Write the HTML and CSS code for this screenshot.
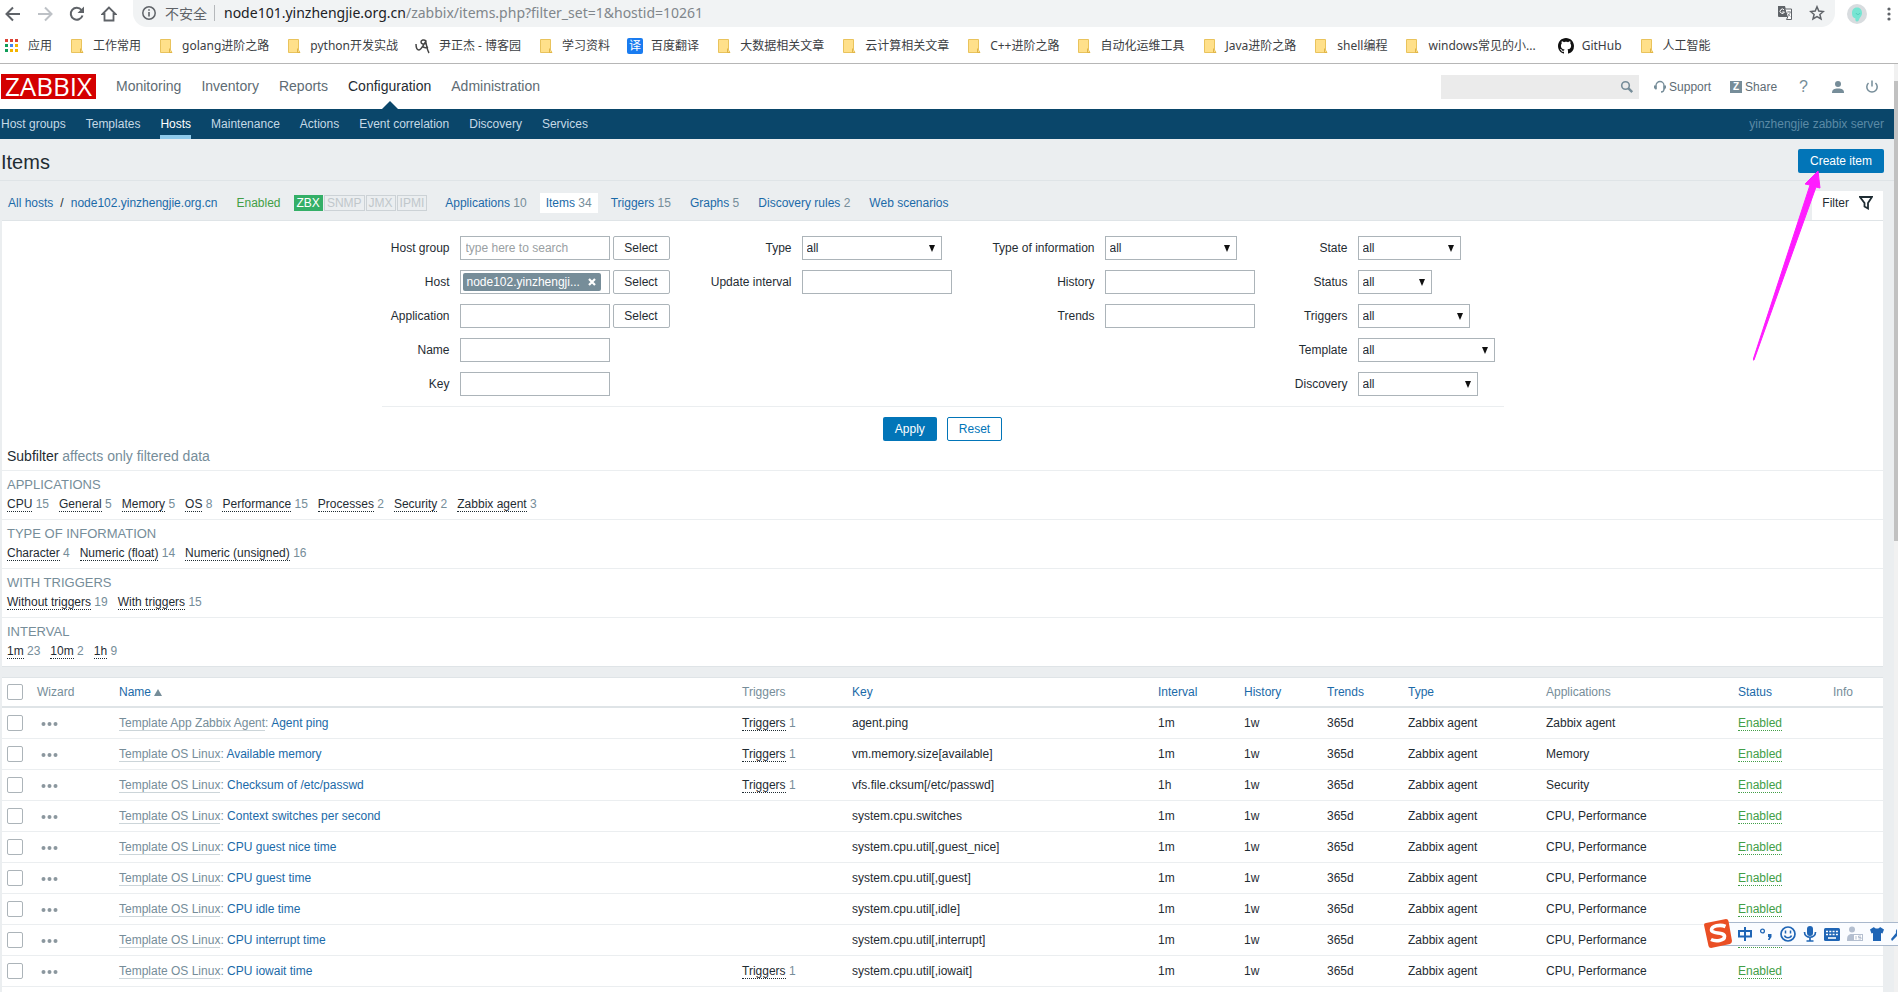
FILE: index.html
```html
<!DOCTYPE html>
<html lang="en">
<head>
<meta charset="utf-8">
<title>Configuration of items</title>
<link rel="stylesheet" href="styles.css">
</head>
<body>
<svg class="defs" aria-hidden="true">
  <symbol id="folder" viewBox="0 0 16 16"><path d="M2.500 1.500h10v10.500l1.500 2.500h-11.500z" fill="#ffe08a" stroke="#e9c35c"/><path d="M11.500 10.500v4h2.500" fill="none" stroke="#e0b548"/></symbol>
  <symbol id="more" viewBox="0 0 18 6"><g fill="#8b979e"><circle cx="2.500" cy="3" r="2"/><circle cx="8.500" cy="3" r="2"/><circle cx="14.500" cy="3" r="2"/></g></symbol>
</svg>

<div class="browser">
  <div class="toolbar">
    <button class="tool" aria-label="Back"><svg width="16" height="16" viewBox="0 0 16 16"><path d="M15 8H2M8 1.500L1.500 8L8 14.500" fill="none" stroke="#5f6368" stroke-width="2"/></svg></button>
    <button class="tool" aria-label="Forward"><svg width="16" height="16" viewBox="0 0 16 16"><path d="M1 8h13M8 1.500L14.500 8L8 14.500" fill="none" stroke="#bdc1c6" stroke-width="2"/></svg></button>
    <button class="tool" aria-label="Reload"><svg width="16" height="16" viewBox="0 0 16 16"><path d="M13.500 9.500A6 6 0 1 1 12.500 4" fill="none" stroke="#5f6368" stroke-width="2"/><path d="M15 .5v6.500H8.500z" fill="#5f6368"/></svg></button>
    <button class="tool" aria-label="Home"><svg width="16" height="16" viewBox="0 0 16 16"><path d="M8 1.500L1.500 8H3.500v6.500h9V8h2z" fill="none" stroke="#5f6368" stroke-width="1.800"/></svg></button>
    <div class="omnibox">
      <svg width="14" height="14" viewBox="0 0 14 14"><circle cx="7" cy="7" r="6.200" fill="none" stroke="#5f6368" stroke-width="1.500"/><path d="M7 6v4.500M7 3.200v1.600" stroke="#5f6368" stroke-width="1.600"/></svg>
      <span class="insecure">不安全</span>
      <span class="url"><b>node101.yinzhengjie.org.cn</b>/zabbix/items.php?filter_set=1&amp;hostid=10261</span>
      <svg width="14" height="14" viewBox="0 0 14 14"><path d="M0 0h7l3 11H1a1 1 0 0 1-1-1z" fill="#5f6368"/><path d="M7.500 3h6v10.500H8.500l1.500-3" fill="#fff" stroke="#5f6368"/><path d="M9 6h4M11 5v1M12.300 6c-.4 2-1.500 3-2.500 4M9.600 7.500l2.700 3" fill="none" stroke="#8b8f94"/><path d="M6 3.800A2.200 2.200 0 1 0 6.400 6H4.300" fill="none" stroke="#fff"/></svg>
      <svg width="16" height="16" viewBox="0 0 16 16"><path d="M8 1.800l1.800 4.300 4.600.4-3.500 3 1.100 4.500L8 11.600 4 14l1.100-4.500-3.500-3 4.600-.4z" fill="none" stroke="#5f6368" stroke-width="1.500"/></svg>
    </div>
    <svg class="avatar" width="20" height="20" viewBox="0 0 20 20"><circle cx="10" cy="10" r="10" fill="#d8dcdf"/><path d="M10 3.500c3.500 0 5 2.500 5 5.500 0 2.500-1.500 3.500-2.500 5.500-.5 1.500-1 3-2.500 3s-2-1.500-1.500-3C6 14 5 12 5 9c0-3 1.500-5.500 5-5.500z" fill="#76e5d2"/><path d="M9 9c1 2 3 2 4 0" fill="none" stroke="#4fc9b8"/></svg>
    <button class="kebab" aria-label="Menu"><svg width="4" height="14" viewBox="0 0 4 14"><g fill="#5f6368"><circle cx="2" cy="2" r="1.600"/><circle cx="2" cy="7" r="1.600"/><circle cx="2" cy="12" r="1.600"/></g></svg></button>
  </div>
  <nav class="bookmarks">
    <a href="#"><svg width="16" height="16" viewBox="0 0 16 16"><g fill="#db4437"><path d="M1 1h3v3H1zM6 1h3v3H6zM11 1h3v3h-3z"/></g><path d="M1 6h3v3H1z" fill="#0f9d58"/><path d="M6 6h3v3H6z" fill="#4285f4"/><path d="M11 6h3v3h-3z" fill="#f4b400"/><path d="M1 11h3v3H1z" fill="#0f9d58"/><path d="M6 11h3v3H6zM11 11h3v3h-3z" fill="#f4b400"/></svg>应用</a>
    <a href="#"><svg width="16" height="16"><use href="#folder"/></svg>工作常用</a>
    <a href="#"><svg width="16" height="16"><use href="#folder"/></svg>golang进阶之路</a>
    <a href="#"><svg width="16" height="16"><use href="#folder"/></svg>python开发实战</a>
    <a href="#"><svg width="16" height="16" viewBox="0 0 16 16"><path d="M1 6c0 4 1 6 3 6s4-4 7-9c-2-2-5-1-5 1s3 3 5 1c1 4 1 7 3 10M7 8c2 2 4 2 6 1" fill="none" stroke="#444" stroke-width="1.500"/></svg>尹正杰 - 博客园</a>
    <a href="#"><svg width="16" height="16"><use href="#folder"/></svg>学习资料</a>
    <a href="#"><span class="fanyi">译</span>百度翻译</a>
    <a href="#"><svg width="16" height="16"><use href="#folder"/></svg>大数据相关文章</a>
    <a href="#"><svg width="16" height="16"><use href="#folder"/></svg>云计算相关文章</a>
    <a href="#"><svg width="16" height="16"><use href="#folder"/></svg>C++进阶之路</a>
    <a href="#"><svg width="16" height="16"><use href="#folder"/></svg>自动化运维工具</a>
    <a href="#"><svg width="16" height="16"><use href="#folder"/></svg>Java进阶之路</a>
    <a href="#"><svg width="16" height="16"><use href="#folder"/></svg>shell编程</a>
    <a href="#"><svg width="16" height="16"><use href="#folder"/></svg>windows常见的小...</a>
    <a href="#" class="github"><svg width="16" height="16" viewBox="0 0 16 16"><path fill="#111" d="M8 0C3.580 0 0 3.580 0 8c0 3.540 2.290 6.530 5.470 7.590.4.070.55-.17.55-.38 0-.19-.01-.82-.01-1.490-2.010.37-2.530-.49-2.690-.94-.09-.23-.48-.94-.82-1.130-.28-.15-.68-.52-.01-.53.63-.01 1.080.58 1.230.82.72 1.210 1.870.87 2.330.66.07-.52.28-.87.51-1.070-1.780-.2-3.640-.89-3.640-3.950 0-.87.31-1.590.82-2.150-.08-.2-.36-1.020.08-2.120 0 0 .67-.21 2.200.82.64-.18 1.320-.27 2-.27s1.360.09 2 .27c1.530-1.040 2.200-.82 2.200-.82.44 1.100.16 1.920.08 2.120.51.56.82 1.270.82 2.150 0 3.070-1.870 3.750-3.650 3.950.29.25.54.73.54 1.480 0 1.070-.01 1.930-.01 2.200 0 .21.15.46.55.38A8.010 8.010 0 0 0 16 8c0-4.420-3.580-8-8-8z"/></svg>GitHub</a>
    <a href="#"><svg width="16" height="16"><use href="#folder"/></svg>人工智能</a>
  </nav>
</div>

<div class="viewport">
<div class="page">
  <header class="header">
    <a href="#" class="logo">ZABBIX</a>
    <nav class="mainnav">
      <a href="#">Monitoring</a><a href="#">Inventory</a><a href="#">Reports</a><a href="#" class="current">Configuration</a><a href="#">Administration</a>
    </nav>
    <form class="search">
      <input type="text" aria-label="Search">
      <button type="button" aria-label="Search"><svg width="14" height="14" viewBox="0 0 14 14"><circle cx="5.500" cy="5.500" r="3.800" fill="none" stroke="#768d99" stroke-width="1.600"/><path d="M8.200 8.200l4 4" stroke="#768d99" stroke-width="2.400"/></svg></button>
    </form>
    <a href="#" class="support"><svg width="12" height="13" viewBox="0 0 12 13"><path d="M2 9V5.500a4 4 0 0 1 8 0V9c0 2-1 3-3 3" fill="none" stroke="#768d99" stroke-width="1.300"/><path d="M0 5.500h2.500v4H1.500L0 8zM12 5.500H9.500v4h1L12 8z" fill="#768d99"/></svg>Support</a>
    <a href="#" class="share"><span class="zbadge">Z</span>Share</a>
    <a href="#" class="help">?</a>
    <a href="#" class="user" aria-label="Profile"><svg width="12" height="12" viewBox="0 0 12 12"><circle cx="6" cy="3" r="3" fill="#768d99"/><path d="M0 12c0-3.500 2-4.500 6-4.500s6 1 6 4.500z" fill="#768d99"/></svg></a>
    <a href="#" class="power" aria-label="Sign out"><svg width="14" height="14" viewBox="0 0 14 14"><path d="M3.500 3a5.200 5.200 0 1 0 7 0M7 .5v6" fill="none" stroke="#768d99" stroke-width="1.500"/></svg></a>
  </header>
  <nav class="subnav">
    <a href="#">Host groups</a><a href="#">Templates</a><a href="#" class="selected">Hosts</a><a href="#">Maintenance</a><a href="#">Actions</a><a href="#">Event correlation</a><a href="#">Discovery</a><a href="#">Services</a>
    <span class="server">yinzhengjie zabbix server</span>
  </nav>

  <div class="title">
    <h1>Items</h1>
    <button class="primary">Create item</button>
  </div>

  <div class="tabs">
    <a href="#">All hosts</a><span class="slash">/</span><a href="#">node102.yinzhengjie.org.cn</a>
    <span class="enabled">Enabled</span>
    <span class="ifaces"><span class="on">ZBX</span><span>SNMP</span><span>JMX</span><span>IPMI</span></span>
    <span class="objects"><span><a href="#">Applications</a> 10</span><span class="active"><a href="#">Items</a> 34</span><span><a href="#">Triggers</a> 15</span><span><a href="#">Graphs</a> 5</span><span><a href="#">Discovery rules</a> 2</span><span><a href="#">Web scenarios</a></span></span>
    <a href="#" class="filtertab">Filter<svg width="14" height="14" viewBox="0 0 14 14"><path d="M1 1h12L9 7v5.500L5.500 10.500V7z" fill="none" stroke="#1f2c33" stroke-width="1.800"/></svg></a>
  </div>

  <section class="filter">
    <form class="form">
      <div class="groups">
        <div class="group g1">
          <label for="hg">Host group</label><div class="field"><input id="hg" class="text" type="text" placeholder="type here to search"><button type="button">Select</button></div>
          <label for="ho">Host</label><div class="field"><div class="multi text"><span class="chip">node102.yinzhengji...<button type="button" aria-label="Remove"><svg width="8" height="8" viewBox="0 0 8 8"><path d="M1 1l6 6M7 1L1 7" stroke="#fff" stroke-width="2.200"/></svg></button></span><input id="ho" type="text"></div><button type="button">Select</button></div>
          <label for="ap">Application</label><div class="field"><input id="ap" class="text" type="text"><button type="button">Select</button></div>
          <label for="na">Name</label><div class="field"><input id="na" class="text" type="text"></div>
          <label for="ke">Key</label><div class="field"><input id="ke" class="text" type="text"></div>
        </div>
        <div class="group g2">
          <label for="ty">Type</label><div class="field"><select id="ty" class="w140"><option>all</option></select></div>
          <label for="ui">Update interval</label><div class="field"><input id="ui" class="text" type="text"></div>
        </div>
        <div class="group g3">
          <label for="ti">Type of information</label><div class="field"><select id="ti" class="w132"><option>all</option></select></div>
          <label for="hi">History</label><div class="field"><input id="hi" class="text" type="text"></div>
          <label for="tr">Trends</label><div class="field"><input id="tr" class="text" type="text"></div>
        </div>
        <div class="group g4">
          <label for="st">State</label><div class="field"><select id="st" class="w103"><option>all</option></select></div>
          <label for="ss">Status</label><div class="field"><select id="ss" class="w74"><option>all</option></select></div>
          <label for="tg">Triggers</label><div class="field"><select id="tg" class="w112"><option>all</option></select></div>
          <label for="te">Template</label><div class="field"><select id="te" class="w137"><option>all</option></select></div>
          <label for="di">Discovery</label><div class="field"><select id="di" class="w120"><option>all</option></select></div>
        </div>
      </div>
      <div class="actions"><button type="button" class="primary">Apply</button><button type="button" class="outline">Reset</button></div>
    </form>
    <p class="subtitle">Subfilter <span>affects only filtered data</span></p>
    <div class="sub"><h3>APPLICATIONS</h3><p><span><a href="#">CPU</a> 15</span><span><a href="#">General</a> 5</span><span><a href="#">Memory</a> 5</span><span><a href="#">OS</a> 8</span><span><a href="#">Performance</a> 15</span><span><a href="#">Processes</a> 2</span><span><a href="#">Security</a> 2</span><span><a href="#">Zabbix agent</a> 3</span></p></div>
    <div class="sub"><h3>TYPE OF INFORMATION</h3><p><span><a href="#">Character</a> 4</span><span><a href="#">Numeric (float)</a> 14</span><span><a href="#">Numeric (unsigned)</a> 16</span></p></div>
    <div class="sub"><h3>WITH TRIGGERS</h3><p><span><a href="#">Without triggers</a> 19</span><span><a href="#">With triggers</a> 15</span></p></div>
    <div class="sub"><h3>INTERVAL</h3><p><span><a href="#">1m</a> 23</span><span><a href="#">10m</a> 2</span><span><a href="#">1h</a> 9</span></p></div>
  </section>

  <div class="list">
  <table>
    <colgroup><col class="c-check"><col class="c-wizard"><col><col class="c-trig"><col class="c-key"><col class="c-int"><col class="c-hist"><col class="c-trend"><col class="c-type"><col class="c-apps"><col class="c-status"><col class="c-info"></colgroup>
    <thead><tr><th><input type="checkbox" aria-label="Select all"></th><th>Wizard</th><th><a href="#">Name<i class="asc"></i></a></th><th>Triggers</th><th><a href="#">Key</a></th><th><a href="#">Interval</a></th><th><a href="#">History</a></th><th><a href="#">Trends</a></th><th><a href="#">Type</a></th><th>Applications</th><th><a href="#">Status</a></th><th>Info</th></tr></thead>
    <tbody>
      <tr><td><input type="checkbox" aria-label="Agent ping"></td><td><button class="wiz" aria-label="Wizard"><svg width="18" height="6"><use href="#more"/></svg></button></td><td class="name"><a href="#" class="tpl">Template App Zabbix Agent</a>: <a href="#">Agent ping</a></td><td class="trig"><a href="#">Triggers</a> 1</td><td>agent.ping</td><td>1m</td><td>1w</td><td>365d</td><td>Zabbix agent</td><td>Zabbix agent</td><td><a href="#" class="ok">Enabled</a></td><td></td></tr>
      <tr><td><input type="checkbox" aria-label="Available memory"></td><td><button class="wiz" aria-label="Wizard"><svg width="18" height="6"><use href="#more"/></svg></button></td><td class="name"><a href="#" class="tpl">Template OS Linux</a>: <a href="#">Available memory</a></td><td class="trig"><a href="#">Triggers</a> 1</td><td>vm.memory.size[available]</td><td>1m</td><td>1w</td><td>365d</td><td>Zabbix agent</td><td>Memory</td><td><a href="#" class="ok">Enabled</a></td><td></td></tr>
      <tr><td><input type="checkbox" aria-label="Checksum"></td><td><button class="wiz" aria-label="Wizard"><svg width="18" height="6"><use href="#more"/></svg></button></td><td class="name"><a href="#" class="tpl">Template OS Linux</a>: <a href="#">Checksum of /etc/passwd</a></td><td class="trig"><a href="#">Triggers</a> 1</td><td>vfs.file.cksum[/etc/passwd]</td><td>1h</td><td>1w</td><td>365d</td><td>Zabbix agent</td><td>Security</td><td><a href="#" class="ok">Enabled</a></td><td></td></tr>
      <tr><td><input type="checkbox" aria-label="Context switches"></td><td><button class="wiz" aria-label="Wizard"><svg width="18" height="6"><use href="#more"/></svg></button></td><td class="name"><a href="#" class="tpl">Template OS Linux</a>: <a href="#">Context switches per second</a></td><td></td><td>system.cpu.switches</td><td>1m</td><td>1w</td><td>365d</td><td>Zabbix agent</td><td>CPU, Performance</td><td><a href="#" class="ok">Enabled</a></td><td></td></tr>
      <tr><td><input type="checkbox" aria-label="CPU guest nice time"></td><td><button class="wiz" aria-label="Wizard"><svg width="18" height="6"><use href="#more"/></svg></button></td><td class="name"><a href="#" class="tpl">Template OS Linux</a>: <a href="#">CPU guest nice time</a></td><td></td><td>system.cpu.util[,guest_nice]</td><td>1m</td><td>1w</td><td>365d</td><td>Zabbix agent</td><td>CPU, Performance</td><td><a href="#" class="ok">Enabled</a></td><td></td></tr>
      <tr><td><input type="checkbox" aria-label="CPU guest time"></td><td><button class="wiz" aria-label="Wizard"><svg width="18" height="6"><use href="#more"/></svg></button></td><td class="name"><a href="#" class="tpl">Template OS Linux</a>: <a href="#">CPU guest time</a></td><td></td><td>system.cpu.util[,guest]</td><td>1m</td><td>1w</td><td>365d</td><td>Zabbix agent</td><td>CPU, Performance</td><td><a href="#" class="ok">Enabled</a></td><td></td></tr>
      <tr><td><input type="checkbox" aria-label="CPU idle time"></td><td><button class="wiz" aria-label="Wizard"><svg width="18" height="6"><use href="#more"/></svg></button></td><td class="name"><a href="#" class="tpl">Template OS Linux</a>: <a href="#">CPU idle time</a></td><td></td><td>system.cpu.util[,idle]</td><td>1m</td><td>1w</td><td>365d</td><td>Zabbix agent</td><td>CPU, Performance</td><td><a href="#" class="ok">Enabled</a></td><td></td></tr>
      <tr><td><input type="checkbox" aria-label="CPU interrupt time"></td><td><button class="wiz" aria-label="Wizard"><svg width="18" height="6"><use href="#more"/></svg></button></td><td class="name"><a href="#" class="tpl">Template OS Linux</a>: <a href="#">CPU interrupt time</a></td><td></td><td>system.cpu.util[,interrupt]</td><td>1m</td><td>1w</td><td>365d</td><td>Zabbix agent</td><td>CPU, Performance</td><td><a href="#" class="ok">Enabled</a></td><td></td></tr>
      <tr><td><input type="checkbox" aria-label="CPU iowait time"></td><td><button class="wiz" aria-label="Wizard"><svg width="18" height="6"><use href="#more"/></svg></button></td><td class="name"><a href="#" class="tpl">Template OS Linux</a>: <a href="#">CPU iowait time</a></td><td class="trig"><a href="#">Triggers</a> 1</td><td>system.cpu.util[,iowait]</td><td>1m</td><td>1w</td><td>365d</td><td>Zabbix agent</td><td>CPU, Performance</td><td><a href="#" class="ok">Enabled</a></td><td></td></tr>
    </tbody>
  </table>
  </div>
</div>
<div class="scroll"><div class="thumb"></div></div>
</div>

<svg class="arrow" width="70" height="192" viewBox="0 0 70 192" aria-hidden="true"><path d="M65 1L67 18L63 17L1 190L0 190L57 15L52 14z" fill="#ff1cff" stroke="#ff1cff"/></svg>

<div class="ime">
  <svg class="sogou" width="30" height="30" viewBox="0 0 30 30"><path d="M1 6Q1 4 3 4L23 0Q25 0 25.500 2L29 22Q29 24 27 25L8 29Q6 29 5.500 27z" fill="#ea4f24"/><path d="M22.500 7.500C17 5 8.500 7 8.500 11c0 4.500 13 1.500 13 6.500 0 4-8.500 5.500-13.500 3" fill="none" stroke="#fff" stroke-width="3.600"/></svg>
  <svg width="14" height="14" viewBox="0 0 14 14"><path d="M1 4h12v5.500H1zM7 0v14" fill="none" stroke="#1f65b5" stroke-width="2"/></svg>
  <svg width="14" height="14" viewBox="0 0 14 14"><circle cx="3.500" cy="4" r="1.900" fill="none" stroke="#1f65b5" stroke-width="1.300"/><path d="M9 7h3.500v3L10.500 13H9l1-3H9z" fill="#1f65b5"/></svg>
  <svg width="16" height="16" viewBox="0 0 16 16"><circle cx="8" cy="8" r="7" fill="none" stroke="#1f65b5" stroke-width="1.700"/><path d="M5.500 4.500v3M10.500 4.500v3M4.500 9.500c1 3 6 3 7 0" fill="none" stroke="#1f65b5" stroke-width="1.500"/></svg>
  <svg width="14" height="16" viewBox="0 0 14 16"><rect x="4" y="0" width="6" height="10" rx="3" fill="#1f65b5"/><path d="M1.500 6c0 7 11 7 11 0M7 11v4M3.500 15h7" fill="none" stroke="#1f65b5" stroke-width="1.700"/></svg>
  <svg width="16" height="13" viewBox="0 0 16 13"><rect width="16" height="13" rx="1.500" fill="#1f65b5"/><path d="M2 3.500h12M2 6.500h12" stroke="#fff" stroke-width="1.600" stroke-dasharray="2 1.300"/><path d="M4 10h8" stroke="#fff" stroke-width="1.600"/></svg>
  <svg width="16" height="16" viewBox="0 0 16 16"><circle cx="5" cy="3.500" r="3" fill="#b4bfd0"/><path d="M0 15c0-5 1-7 5-7 3 0 4 1 4 3v4z" fill="#b4bfd0"/><rect x="6.500" y="8.500" width="9" height="6" fill="#fff" stroke="#b4bfd0"/><path d="M9 10v3.500M14 10h-2.500v1.500H14v1.500h-2.500" fill="none" stroke="#b4bfd0"/></svg>
  <svg width="14" height="14" viewBox="0 0 14 14"><path d="M4 0c1 2 5 2 6 0l4 2.500-1.500 4L11 6v8H3V6l-1.500.5L0 2.500z" fill="#1f65b5"/></svg>
  <svg class="wrench" width="6" height="14" viewBox="0 0 6 14"><path d="M1 14l-1-2 5-6c-.3-2 0-3 1-4v7z" fill="#1f65b5"/></svg>
</div>
</body>
</html>
```
FILE: styles.css
```css
* { box-sizing: border-box; }
html, body { margin: 0; }
body {
  position: relative;
  display: flex;
  flex-direction: column;
  min-height: 100vh;
  overflow-x: hidden;
  background: #fff;
  color: #1f2c33;
  font: 12px/16px "Liberation Sans", "Noto Sans CJK SC", sans-serif;
}
a { text-decoration: none; }
a:link, a:visited { color: #1b6aa8; }
button, input, select { font: inherit; color: inherit; margin: 0; }
button { cursor: pointer; padding: 0; border: 0; background: none; }
svg { display: block; flex: none; }
h1, h3, p { margin: 0; font-weight: normal; }
.defs { position: absolute; width: 0; height: 0; }

/* browser chrome */
.browser { border-bottom: 1px solid #b6b6b6; }
.toolbar { display: flex; align-items: center; height: 27px; padding-left: 5px; }
.tool { width: 16px; margin-right: 16px; }
.omnibox {
  flex: 1;
  display: flex;
  align-items: center;
  height: 27px;
  margin-right: 12px;
  padding: 0 10px 2px 9px;
  border-radius: 0 0 14px 14px;
  background: #f1f3f4;
}
.insecure {
  margin-left: 9px;
  padding-right: 7px;
  border-right: 1px solid #b5b8bb;
  color: #5f6368;
  font: 14px/16px "Noto Sans CJK SC", sans-serif;
}
.url { flex: 1; margin-left: 9px; color: #80868b; font: 14px/20px "Noto Sans", sans-serif; }
.url b { color: #202124; font-weight: normal; }
.omnibox svg:last-child { margin-left: 17px; }
.avatar { margin-right: 20px; }
.kebab { margin-right: 7px; }
.bookmarks { display: flex; align-items: center; gap: 17px; height: 36px; padding: 1px 0 0 4px; white-space: nowrap; }
.bookmarks a { display: flex; align-items: center; gap: 8px; color: #3c4043; font: 12px/16px "Noto Sans", "Noto Sans CJK SC", sans-serif; }
.fanyi { width: 16px; border-radius: 2px; background: #1a7cf0; text-align: center; color: #fff; }
.bookmarks .github { margin-left: 5px; }

/* page */
.viewport { flex: 1; display: flex; }
.page { flex: 1; min-width: 0; display: flex; flex-direction: column; background: #ebeef0; }
.scroll { width: 4px; padding-top: 17px; background: #f1f1f1; }
.thumb { height: 460px; background: #c1c1c1; }

.header { display: flex; align-items: center; height: 45px; padding-right: 15px; background: #fff; }
.logo { width: 95px; margin-left: 1px; background: #d40000; font: 26px/25px "Open Sans", sans-serif; text-align: center; }
.logo:link, .logo:visited { color: #fff; }
.mainnav { display: flex; flex: 1; gap: 20px; margin-left: 20px; font-size: 14px; }
.mainnav a { position: relative; color: #5e6c74; line-height: 45px; }
.mainnav a.current { color: #1f2c33; }
.current::after {
  content: "";
  position: absolute;
  left: 50%;
  bottom: 0;
  margin-left: -8px;
  border: 8px solid transparent;
  border-top: 0;
  border-bottom-color: #0a466a;
}
.search { display: flex; align-items: center; width: 198px; height: 24px; padding-right: 5px; background: #ebebeb; }
.search input { flex: 1; min-width: 0; border: 0; background: none; }
.header a.support, .header a.share { display: flex; align-items: center; gap: 3px; color: #5e6c74; }
.header a.support { margin-left: 15px; }
.header a.share { margin-left: 19px; }
.zbadge { width: 12px; background: #768d99; color: #fff; font-size: 10px; font-weight: bold; line-height: 12px; text-align: center; }
.header a.help { margin-left: 22px; color: #768d99; font-size: 16px; }
.user { margin-left: 24px; }
.power { margin-left: 21px; }

.subnav { display: flex; gap: 20px; height: 30px; padding: 0 10px 0 1px; background: #0a466a; line-height: 30px; }
.subnav a { color: #c5d9e6; }
.subnav a.selected { color: #fff; border-bottom: 4px solid #8fcaeb; }
.server { margin-left: auto; color: #5b8aa6; }

.title { display: flex; align-items: center; justify-content: space-between; height: 42px; padding: 4px 10px 0 1px; border-bottom: 1px solid #dfe4e7; }
.title h1 { font-size: 20px; line-height: 24px; }
.primary { height: 24px; padding: 0 12px; border-radius: 2px; background: #0275b8; color: #fff; }
.title .primary { margin-bottom: 1px; }
.tabs { display: flex; align-items: center; height: 39px; padding: 5px 11px 0 8px; }
.slash { margin: 0 7px; }
.enabled { margin-left: 19px; color: #429e47; }
.ifaces { display: flex; gap: 1px; margin-left: 13px; line-height: 14px; }
.ifaces span { padding: 0 2px; border: 1px solid #ccd2d6; color: #c0c7cb; }
.ifaces .on { border-color: #34af67; background: #34af67; color: #fff; }
.objects { display: flex; gap: 19px; margin-left: 18px; color: #768d99; line-height: 20px; }
.objects .active { margin: 0 -6px; padding: 0 6px; background: #fff; }
.tabs a.filtertab { display: flex; align-items: center; align-self: stretch; gap: 10px; margin: 5px 0 0 auto; padding: 0 10px 5px; background: #fff; color: #1f2c33; }

.filter { margin: 0 11px 0 2px; border-top: 1px solid #dfe4e7; border-bottom: 1px solid #dfe4e7; background: #fff; }
.form { width: 1122px; max-width: 100%; margin: 0 auto; padding-top: 15px; }
.groups { display: flex; padding-bottom: 10px; border-bottom: 1px solid #ebeef0; }
.group { display: grid; grid-auto-rows: 24px; row-gap: 10px; align-content: start; align-items: center; }
.g1 { grid-template-columns: 78px 210px; }
.g2 { grid-template-columns: 132px 150px; }
.g3 { grid-template-columns: 153px 150px; }
.g4 { grid-template-columns: 103px 146px; }
.group label { padding-right: 10px; text-align: right; }
.field { display: flex; gap: 3px; }
.text, .field select { height: 24px; border: 1px solid #acb4b9; background: #fff; border-radius: 0; }
.text { width: 150px; padding: 0 5px; }
.text::placeholder { color: #9a9fa3; }
.field > button { width: 57px; height: 24px; border: 1px solid #acb4b9; border-radius: 2px; background: #fff; }
.multi { display: flex; align-items: center; padding: 0 2px; }
.multi input { width: 4px; padding: 0; border: 0; }
.chip { display: flex; align-items: center; gap: 8px; height: 18px; padding: 0 5px 0 4px; border-radius: 2px; background: #768d99; color: #fff; }
.field select {
  appearance: none;
  padding: 0 4px;
  background: #fff url("data:image/svg+xml,%3Csvg xmlns='http://www.w3.org/2000/svg' width='6' height='7'%3E%3Cpath d='M0 0h6L3 7z' fill='%23111'/%3E%3C/svg%3E") no-repeat right 6px center;
}
.w140 { width: 140px; }
.w132 { width: 132px; }
.w103 { width: 103px; }
.w74 { width: 74px; }
.w112 { width: 112px; }
.w137 { width: 137px; }
.w120 { width: 120px; }
.actions { display: flex; justify-content: center; gap: 10px; padding-top: 10px; }
.outline { height: 24px; padding: 0 11px; border: 1px solid #0275b8; border-radius: 2px; background: #fff; color: #0275b8; }
.subtitle { padding: 7px 5px 5px; font-size: 14px; line-height: 17px; }
.subtitle span { color: #768d99; }
.sub { height: 49px; padding: 6px 5px 0; border-top: 1px solid #ebeef0; color: #768d99; }
.sub h3 { font-size: 13px; line-height: 16px; }
.sub p { display: flex; gap: 10px; padding-top: 4px; line-height: 15px; }
.sub a, .trig a { border-bottom: 1px dotted #1f2c33; }
.sub a:link, .trig a:link { color: #1f2c33; }

.list { flex: 1; margin: 10px 11px 0 2px; border-top: 1px solid #dfe4e7; background: #fff; }
table { width: 100%; table-layout: fixed; border-collapse: collapse; }
.c-check { width: 30px; }
.c-wizard { width: 82px; }
.c-trig { width: 110px; }
.c-key { width: 306px; }
.c-int { width: 86px; }
.c-hist { width: 83px; }
.c-trend { width: 81px; }
.c-type { width: 138px; }
.c-apps { width: 192px; }
.c-status { width: 95px; }
.c-info { width: 55px; }
th, td { height: 31px; padding: 0 5px; text-align: left; font-weight: normal; white-space: nowrap; }
th { height: 29px; color: #768d99; border-bottom: 2px solid #dfe4e7; }
td { border-bottom: 1px solid #ebeef0; }
td input, th input { appearance: none; display: block; width: 16px; height: 16px; border: 1px solid #acb4b9; border-radius: 2px; background: #fff; }
.asc { display: inline-block; margin-left: 3px; border: 4px solid transparent; border-top: 0; border-bottom: 7px solid #768d99; }
.wiz { display: block; margin: 2px 0 0 4px; }
.name, .name a.tpl { color: #768d99; }
.name a.tpl { border-bottom: 1px solid #ccd5d9; }
.trig { color: #768d99; }
td a.ok { border-bottom: 1px dotted #429e47; color: #429e47; }

/* overlays */
.arrow { position: absolute; left: 1753px; top: 170px; pointer-events: none; }
.ime {
  position: absolute;
  left: 1713px;
  top: 922px;
  right: 0;
  display: flex;
  align-items: center;
  gap: 7px;
  height: 24px;
  padding-left: 24px;
  border: 1px solid #a9b8cc;
  border-right: 0;
  background: #fafcff;
}
.sogou { position: absolute; left: -11px; top: -4px; }
```
